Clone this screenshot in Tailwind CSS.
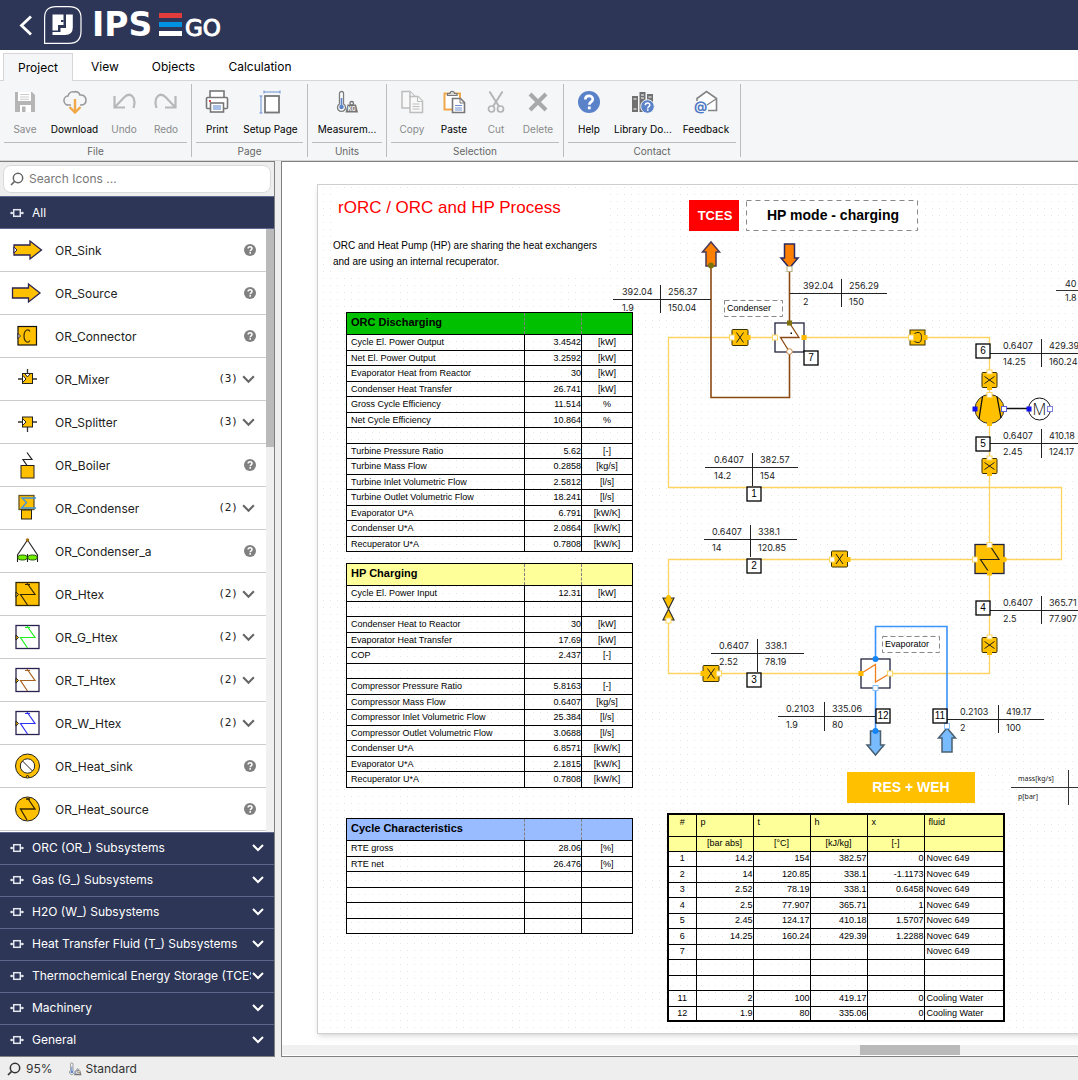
<!DOCTYPE html>
<html lang="en">
<head>
<meta charset="utf-8">
<title>IPSE GO</title>
<script src="https://cdn.jsdelivr.net/npm/@tailwindcss/browser@4"></script>
</head>
<body class="flex h-screen flex-col overflow-hidden bg-[#eeeeee] font-['Inter',sans-serif] text-[12px] text-[#222]">

<!-- Shared symbols -->
<svg class="hidden" aria-hidden="true">
  <symbol id="chev" viewBox="0 0 14 10"><path d="M2 2l5 5 5-5" fill="none" stroke="currentColor" stroke-width="2"/></symbol>
  <symbol id="help" viewBox="0 0 12 12"><circle cx="6" cy="6" r="6" fill="#808080"/><path d="M4.1 4.6c0-2.5 3.9-2.4 3.9-.1C8 5.900 6.200 5.700 6.200 7.200" fill="none" stroke="#fff" stroke-width="1.500"/><rect x="5.400" y="8.100" width="1.600" height="1.600" fill="#fff"/></symbol>
  <symbol id="block" viewBox="0 0 14 10"><path d="M1 5h3M10 5h3" stroke="#e4e7f0" stroke-width="1.500"/><circle cx="1.500" cy="5" r="1.200" fill="#e4e7f0"/><circle cx="12.500" cy="5" r="1.200" fill="#e4e7f0"/><rect x="3.700" y="1.700" width="6.600" height="6.600" fill="none" stroke="#e4e7f0" stroke-width="1.500"/></symbol>
  <symbol id="lens" viewBox="0 0 14 14"><circle cx="8" cy="6" r="4.700" fill="none" stroke="currentColor" stroke-width="1.500"/><path d="M5 9L1 13" stroke="currentColor" stroke-width="1.700"/></symbol>
  <symbol id="units" viewBox="0 0 24 24"><path d="M4.500 3.500a2 2 0 0 1 4 0V14a4 4 0 1 1-4 0z" fill="#fff" stroke="#7c7c7c" stroke-width="1.300"/><circle cx="6.500" cy="17" r="2.300" fill="#5b84c9"/><path d="M6.500 8v9" stroke="#5b84c9" stroke-width="1.600"/><path d="M12.500 14.500h8.500l2 8H10.500z" fill="#757575"/><circle cx="16.700" cy="13.300" r="1.800" fill="none" stroke="#757575" stroke-width="1.300"/><text x="12.800" y="21" font-size="5.500" font-weight="700" fill="#fff">KG</text></symbol>
</svg>

<header class="flex h-[50px] shrink-0 items-center bg-[#2d3656]">
  <a href="#" aria-label="Back" class="ml-[17px] block"><svg class="h-6 w-4" viewBox="0 0 16 24"><path d="M14 3.500L4.500 12.500 14 21.500" fill="none" stroke="#fff" stroke-width="2.800"/></svg></a>
  <svg class="ml-[10px] h-[40px] w-[40px]" viewBox="43 5 40 40" role="img" aria-label="Logo">
    <path d="M44.600 43.400V18Q44.600 6.600 56 6.600H69Q81 6.600 81 18V31Q81 43.400 69 43.400Z" fill="none" stroke="#fff" stroke-width="1.200"/>
    <path d="M52.500 14.500H63.500V25H58V30.500H52.500Z" fill="#fff"/>
    <path d="M66 14.500H72.800V27.500Q72.800 35 65 35H52.500V32H60.500V28H66Z" fill="#fff"/>
    <rect x="61" y="20" width="2.500" height="2" fill="#2d3656"/>
  </svg>
  <svg class="ml-[7px] h-[40px] w-[136px]" viewBox="90 5 136 40" fill="#fff" font-family="'DejaVu Sans',sans-serif">
    <text x="92" y="36" font-size="33" font-weight="700">IPS</text>
    <rect x="159" y="13" width="23" height="5" fill="#e03c3c"/><rect x="159" y="22" width="23" height="5" fill="#0092e0"/><rect x="159" y="31" width="23" height="5"/>
    <text x="185" y="36" font-size="23" stroke="#fff" stroke-width="1">GO</text>
  </svg>
</header>

<nav class="flex h-[31px] shrink-0 items-end border-b border-[#d6d6d6] bg-white pl-[3px] text-[12px] text-black">
  <button class="-mb-px h-[28px] w-[70px] border border-b-0 border-[#d6d6d6] bg-[#f4f6f8]">Project</button>
  <button class="h-[26px] w-[64px]">View</button>
  <button class="h-[26px] w-[73px]">Objects</button>
  <button class="h-[26px] w-[100px]">Calculation</button>
</nav>

<section class="flex h-[80px] shrink-0 items-stretch border-b border-[#d6d6d6] bg-[#f4f6f8] py-[3px] text-[10px] leading-[14px] text-black" aria-label="Ribbon">
  <div class="flex flex-col border-r border-[#bcbcbc] px-1">
    <div class="flex h-[59px] shrink-0 border-b border-[#bcbcbc]">
      <button class="flex w-[42px] flex-col items-center justify-start gap-2 pt-1.5 text-[#8a8a8a]"><svg class="h-6 w-6" viewBox="0 0 24 24"><path d="M2 2h17l3 3v17H2z" fill="#b5b5b5"/><rect x="5" y="2" width="13" height="9" fill="#fff"/><path d="M7 4.500h9M7 7h9M7 9.300h9" stroke="#ccc"/><rect x="7" y="15" width="11" height="7" fill="#fff"/><rect x="9" y="16.500" width="3.500" height="5.500" fill="#b5b5b5"/></svg>Save</button>
      <button class="flex w-[57px] flex-col items-center justify-start gap-2 pt-1.5"><svg class="h-6 w-6" viewBox="0 0 24 24"><path d="M8 15H6a4.500 4.500 0 0 1-1-9C6 2.500 9 1.500 11 2c2-1 5 0 6 3 3.500-.5 6 2 6 5s-2 5-5 5h-1" fill="none" stroke="#9a9a9a" stroke-width="1.600"/><path d="M12 9v13M6.500 17l5.500 5.500 5.500-5.500" fill="none" stroke="#f0a848" stroke-width="2.400"/></svg>Download</button>
      <button class="flex w-[42px] flex-col items-center justify-start gap-2 pt-1.5 text-[#8a8a8a]"><svg class="h-6 w-6" viewBox="0 0 24 24"><path d="M2.500 6v11.500H13M3 17L12 7.500c6-6 13-1 9.500 10.500" fill="none" stroke="#b8b8b8" stroke-width="2.200"/></svg>Undo</button>
      <button class="flex w-[42px] flex-col items-center justify-start gap-2 pt-1.5 text-[#8a8a8a]"><svg class="h-6 w-6" viewBox="0 0 24 24"><path d="M21.500 6v11.500H11M21 17L12 7.500C6 1.500-1 6.500 2.500 18" fill="none" stroke="#b8b8b8" stroke-width="2.200"/></svg>Redo</button>
    </div>
    <div class="pt-px text-center text-[#666]">File</div>
  </div>
  <div class="flex flex-col border-r border-[#bcbcbc] px-1">
    <div class="flex h-[59px] shrink-0 border-b border-[#bcbcbc]">
      <button class="flex w-[42px] flex-col items-center justify-start gap-2 pt-1.5"><svg class="h-6 w-6" viewBox="0 0 24 24"><g fill="#fff" stroke="#777" stroke-width="1.600"><rect x="5" y="1" width="14" height="7"/><rect x="1.500" y="7.500" width="21" height="11" rx="1"/><rect x="5.500" y="13" width="13" height="9"/></g><rect x="8" y="15" width="8" height="5" fill="#a9c0e6"/><rect x="4" y="10" width="2" height="2" fill="#d04040"/></svg>Print</button>
      <button class="flex w-[65px] flex-col items-center justify-start gap-2 pt-1.5"><svg class="h-6 w-6" viewBox="0 0 24 24"><rect x="6" y="6" width="14" height="16.500" fill="#fff" stroke="#777" stroke-width="1.800"/><path d="M5 2h16M5 .5v3M21 .5v3M2 6v17M.5 6h3M.5 23h3" stroke="#6c8fd0"/></svg>Setup Page</button>
    </div>
    <div class="pt-px text-center text-[#666]">Page</div>
  </div>
  <div class="flex flex-col border-r border-[#bcbcbc] px-1">
    <div class="flex h-[59px] shrink-0 border-b border-[#bcbcbc]">
      <button class="flex w-[70px] flex-col items-center justify-start gap-2 pt-1.5"><svg class="h-6 w-6"><use href="#units"/></svg>Measurem...</button>
    </div>
    <div class="pt-px text-center text-[#666]">Units</div>
  </div>
  <div class="flex flex-col border-r border-[#bcbcbc] px-1">
    <div class="flex h-[59px] shrink-0 border-b border-[#bcbcbc]">
      <button class="flex w-[42px] flex-col items-center justify-start gap-2 pt-1.5 text-[#8a8a8a]"><svg class="h-6 w-6" viewBox="0 0 24 24"><g fill="#f8f8f8" stroke="#bdbdbd" stroke-width="1.500"><path d="M2 1.500h8l5 5V18H2z"/><path d="M10 1.500V7h5"/><path d="M10 6.500h8l4.500 4.500v11.500H10z"/><path d="M17.500 6.500v5h5M12.500 14h7M12.500 16.500h7M12.500 19h7" stroke-width="1.100"/></g></svg>Copy</button>
      <button class="flex w-[42px] flex-col items-center justify-start gap-2 pt-1.5"><svg class="h-6 w-6" viewBox="0 0 24 24"><path d="M10 19.500H2.500V3.500H18V8" fill="#fff" stroke="#f0a848" stroke-width="2"/><path d="M5.500 5.500V3.500H8a2.200 2.200 0 0 1 4.500 0H15v2z" fill="#d9d9d9" stroke="#777" stroke-width="1.200"/><path d="M10.500 8.500h8l4 4v10h-12z" fill="#fff" stroke="#777" stroke-width="1.600"/><path d="M18 8.500v4.500h4.500" fill="none" stroke="#777"/><path d="M13 15.500h7M13 18h7M13 20h7" stroke="#6c8fd0"/></svg>Paste</button>
      <button class="flex w-[42px] flex-col items-center justify-start gap-2 pt-1.5 text-[#8a8a8a]"><svg class="h-6 w-6" viewBox="0 0 24 24" fill="none" stroke="#b5b5b5"><path d="M5.500 1.500L15 16.500M18.500 1.500L9 16.500" stroke-width="2"/><circle cx="7.500" cy="19" r="3" stroke-width="1.700"/><circle cx="16.500" cy="19" r="3" stroke-width="1.700"/></svg>Cut</button>
      <button class="flex w-[42px] flex-col items-center justify-start gap-2 pt-1.5 text-[#8a8a8a]"><svg class="h-6 w-6" viewBox="0 0 24 24"><path d="M4 4l16 16M20 4L4 20" stroke="#a9a9a9" stroke-width="4"/></svg>Delete</button>
    </div>
    <div class="pt-px text-center text-[#666]">Selection</div>
  </div>
  <div class="flex flex-col border-r border-[#bcbcbc] px-1">
    <div class="flex h-[59px] shrink-0 border-b border-[#bcbcbc]">
      <button class="flex w-[42px] flex-col items-center justify-start gap-2 pt-1.5"><svg class="h-6 w-6" viewBox="0 0 24 24"><circle cx="12" cy="12" r="11" fill="#5a82c8"/><path d="M8.300 9.500c0-5 7.500-4.700 7.500-.3 0 2.800-3.500 2.600-3.500 5.600" fill="none" stroke="#fff" stroke-width="2.600"/><rect x="10.900" y="16.500" width="2.800" height="2.800" fill="#fff"/></svg>Help</button>
      <button class="flex w-[66px] flex-col items-center justify-start gap-2 pt-1.5"><svg class="h-6 w-6" viewBox="0 0 24 24"><rect x="1" y="6" width="6" height="16" fill="#707070"/><rect x="8.500" y="2" width="6" height="20" fill="#707070"/><rect x="16" y="4" width="6" height="12" fill="#707070"/><path d="M2.500 9h3M2.500 19h3M10 5h3M10 8h3M17.500 7h3" stroke="#fff"/><circle cx="16.500" cy="16.500" r="6.800" fill="#5a82c8" stroke="#f4f6f8"/><path d="M14.300 15.200c0-3 4.500-2.900 4.500-.2 0 1.700-2.100 1.500-2.100 3.400" fill="none" stroke="#fff" stroke-width="1.500"/><rect x="15.900" y="19.200" width="1.600" height="1.600" fill="#fff"/></svg>Library Do...</button>
      <button class="flex w-[60px] flex-col items-center justify-start gap-2 pt-1.5"><svg class="h-6 w-6" viewBox="0 0 24 24"><path d="M3 11V8.500L12.500 1.500 22.500 8.500v12H14" fill="#fff" stroke="#858585" stroke-width="1.600"/><path d="M22 9l-9 6" stroke="#858585" stroke-width="1.400"/><text x="0" y="21" font-size="13" font-weight="700" fill="#4f78c4">@</text></svg>Feedback</button>
    </div>
    <div class="pt-px text-center text-[#666]">Contact</div>
  </div>
</section>

<main class="flex min-h-0 flex-1 gap-[6px]">
  <aside class="flex w-[275px] shrink-0 flex-col border-t border-r border-b border-[#808080]">
    <label class="mx-[3px] mt-[3px] mb-[3px] flex h-[28px] shrink-0 items-center rounded-lg border border-[#dadada] bg-white pl-[6px] text-[#666]">
      <svg class="h-3.5 w-3.5 shrink-0"><use href="#lens"/></svg>
      <input type="search" placeholder="Search Icons ..." aria-label="Search icons" class="ml-[5px] w-full bg-transparent text-[12px] outline-none placeholder:text-[#777]">
    </label>
    <button class="flex h-[33px] shrink-0 items-center gap-[8px] border-y border-[#5d678e] bg-[#2d3656] pl-[10px] text-[12px] text-white"><svg class="h-2.5 w-3.5"><use href="#block"/></svg>All</button>
    <div class="flex min-h-0 flex-1 overflow-hidden">
      <ul id="icons" class="flex-1 bg-white"></ul>
      <div class="w-2 bg-[#f0f0f0]"><div class="h-[218px] bg-[#bababa]"></div></div>
    </div>
    <div id="cats" class="shrink-0"></div>
  </aside>

  <div class="flex min-w-0 flex-1 flex-col border-t border-b border-l border-[#808080] bg-white">
    <div class="relative min-h-0 flex-1 overflow-hidden">
      <div class="absolute top-[22px] left-[35px] h-[850px] w-[1100px] border border-[#cfcfcf] bg-white shadow-md">
        <svg class="absolute inset-0 h-full w-full" id="sheet" font-family="Inter,sans-serif" font-size="9">
          <defs>
            <pattern id="dots" width="7" height="7" patternUnits="userSpaceOnUse"><rect x="5" y="2" width="1" height="1" fill="#e6e6e6"/></pattern>
            <g id="xv"><rect x="-8" y="-8" width="16" height="16" rx="1" fill="#ffc000" stroke="#3b3000"/><path d="M-3.500 -5L3.500 5M3.500 -5L-3.500 5" stroke="#222" fill="none"/></g>
            <g id="xh"><rect x="-7.500" y="-7.500" width="15" height="15" rx="1" fill="#ffc000" stroke="#3b3000"/><path d="M-5 -3.500L5 3.500M-5 3.500L5 -3.500" stroke="#222"/><rect x="-2.500" y="-10" width="5" height="4" fill="#fff" stroke="#ffd75e"/><rect x="-2.500" y="6" width="5" height="4" fill="#ffc000"/></g>
            <path id="arrow" d="M-5 24V10H-8.500L0 0L8.500 10H5V24Z" stroke-width="1.500"/>
            <rect id="port" x="-2.500" y="-2.500" width="5" height="5" fill="#fff"/>
            <rect id="full" x="-2.500" y="-2.500" width="5" height="5"/>
          </defs>
          <rect width="100%" height="100%" fill="url(#dots)"/>
          <g transform="translate(-318 -185)">
            <path d="M732 337.500H668.500V487.500H1061.500V559.500H1004M748 337.500H775M804 337.500H910M925 337.500H989.500V394M989.500 424V545M989.500 573V673.500H890M861 673.500H719M703 673.500H668.500V559.500H832M848 559.500H975" fill="none" stroke="#fdd362" stroke-width="1.300"/>
            <path d="M711 265V397.500H789.500V352M789.500 269V323" fill="none" stroke="#8b4a12" stroke-width="1.600"/>
            <path d="M875.500 659V626.500H947V728M875.500 688V731" fill="none" stroke="#3a93fa" stroke-width="1.600"/>
            <path d="M1004 408.500H1029" stroke="#111" stroke-width="1.500"/>
            <use href="#arrow" x="711" y="242" fill="#ff8000" stroke="#4a3a58"/>
            <use href="#arrow" transform="translate(789.500 268) rotate(180)" fill="#ff8000" stroke="#2a2a60"/>
            <use href="#arrow" transform="translate(875.500 755) rotate(180)" fill="#78bcff" stroke="#4a6070"/>
            <use href="#arrow" x="947" y="728" fill="#78bcff" stroke="#4a6070"/>
            <circle cx="711" cy="265.500" r="3" fill="#7d7008"/>
            <use href="#port" x="789.500" y="269" stroke="#b8b080"/>
            <use href="#xv" x="740" y="337.500"/><use href="#port" x="732" y="337.500" stroke="#ffd75e"/><use href="#full" x="748" y="337.500" fill="#ffc000"/>
            <use href="#xv" x="839.500" y="559"/><use href="#port" x="832" y="559.500" stroke="#ffd75e"/><use href="#full" x="848" y="559.500" fill="#ffc000"/>
            <use href="#xv" x="711" y="673.500"/><use href="#port" x="719" y="673.500" stroke="#ffd75e"/><use href="#full" x="703" y="673.500" fill="#ffc000"/>
            <rect x="910" y="330" width="15" height="15" fill="#ffc000" stroke="#3b3000"/><path d="M914.500 333.500c6-3 7 1 7 4s-1 7-7 4" fill="none" stroke="#222"/><use href="#port" x="911" y="337.500" stroke="#ffd75e"/><use href="#full" x="925" y="337.500" fill="#ffc000"/>
            <use href="#xh" x="989.500" y="380"/><use href="#xh" x="989.500" y="466"/><use href="#xh" x="989.500" y="645"/>
            <g stroke="#222240" stroke-width="1.300"><rect x="775" y="323" width="29" height="29" fill="#fff"/><rect x="861" y="659" width="29" height="29" fill="#fff"/><rect x="975" y="544.500" width="29" height="29" fill="#ffc000"/></g>
            <path d="M789.500 323L799 337.500H780.500L789.500 352" fill="none" stroke="#8b4a12" stroke-width="1.300"/><rect x="790.500" y="332.500" width="1.500" height="1.500"/>
            <path d="M861 673.500L875.500 664.500V682L890 673.500" fill="none" stroke="#f08020" stroke-width="1.300"/>
            <path d="M989.500 545L999 559.500H980.500L989.500 573" fill="none" stroke="#222" stroke-width="1.200"/>
            <use href="#full" x="789.500" y="323" fill="#7d7008"/><use href="#port" x="775" y="337.500" stroke="#ffd75e"/><use href="#full" x="804" y="337.500" fill="#ffb800"/><circle cx="789.500" cy="351.500" r="2.800" fill="#fff" stroke="#c88848"/>
            <circle cx="875.500" cy="659" r="3" fill="#1585f5"/><circle cx="875.500" cy="731" r="3" fill="#1585f5"/><use href="#port" x="875.500" y="688" stroke="#8cc4ff"/><use href="#full" x="861" y="673.500" fill="#ffb800"/><use href="#port" x="890" y="673.500" stroke="#ffd75e"/><use href="#port" x="947" y="726" stroke="#8cc4ff"/>
            <circle cx="989.500" cy="409" r="14.500" fill="#ffc000" stroke="#333"/><path d="M982.500 396.500L979 419M997 396.500L1001 418" stroke="#111" stroke-width="1.300"/>
            <use href="#port" x="989.500" y="395" stroke="#ffd75e"/><use href="#full" x="989.500" y="423.500" fill="#ffc000"/>
            <use href="#full" x="975" y="409" fill="#1010f0"/><use href="#port" x="1004" y="409" stroke="#6060d8"/>
            <circle cx="1039.500" cy="409" r="11" fill="#fff" stroke="#111"/><text x="1039.500" y="415" text-anchor="middle" font-size="16" font-family="'Open Sans',sans-serif" font-weight="300" fill="#111">M</text>
            <use href="#full" x="1029" y="409" fill="#1010f0"/><use href="#port" x="1050" y="409" stroke="#8080e0"/>
            <use href="#port" x="989.500" y="545" stroke="#ffd75e"/><use href="#full" x="989.500" y="573" fill="#ffc000"/><use href="#port" x="975" y="559.500" stroke="#ffd75e"/><circle cx="1004" cy="559.500" r="2.800" fill="#ffc000"/>
            <path d="M663 598H674L668.500 609Z M663 620H674L668.500 609Z" fill="#ffc000" stroke="#333" stroke-width="1.200"/><circle cx="668.500" cy="597.500" r="2.500" fill="#ffc000"/><use href="#port" x="668.500" y="620.500" stroke="#ffd75e"/>
            <rect x="689" y="200" width="50" height="31" fill="#f00"/>
            <rect x="746.500" y="200.500" width="171" height="30" fill="#fff" stroke="#888" stroke-dasharray="5 4"/>
            <rect x="847" y="772" width="128" height="31" fill="#ffc000"/>
            <rect x="724.500" y="300.500" width="58" height="16" fill="#fff" stroke="#888" stroke-dasharray="5 3"/>
            <rect x="882.500" y="636.500" width="57" height="16" fill="#fff" stroke="#888" stroke-dasharray="5 3"/>
            <g font-family="'Liberation Sans',sans-serif" fill="#000">
              <g font-weight="700" text-anchor="middle" font-size="14"><text x="715" y="220" fill="#fff" font-size="13">TCES</text><text x="833" y="220">HP mode - charging</text><text x="911" y="792" fill="#fff">RES + WEH</text></g>
              <text x="727" y="311">Condenser</text><text x="885" y="647">Evaporator</text>
            </g>
            <g id="meters" fill="#222"></g>
            <g id="tags" font-family="'Liberation Sans',sans-serif" font-size="10" text-anchor="middle"></g>
            <path d="M1011 787.500H1080M1068.500 770V805M1056 290.500H1080" stroke="#333"/>
            <g fill="#222"><text x="1065" y="287">40</text><text x="1065" y="301">1.8</text></g>
            <g fill="#222" font-size="7" font-family="'Noto Sans',sans-serif"><text x="1018" y="781">mass[kg/s]</text><text x="1018" y="799">p[bar]</text></g>
          </g>
        </svg>
        <div class="absolute top-[8px] left-[14px] w-[276px] bg-white font-['Liberation_Sans',sans-serif] text-black">
          <h1 class="pl-[6px] text-[17px] leading-[29px] text-[#f00]">rORC / ORC and HP Process</h1>
          <p class="mt-[16px] pb-[8px] pl-px text-[10px] leading-[16px] whitespace-nowrap">ORC and Heat Pump (HP) are sharing the heat exchangers<br>and are using an internal recuperator.</p>
        </div>
        <div id="tables" class="absolute top-[127px] left-[28px] w-[287px] font-['Liberation_Sans',sans-serif] text-[9px] leading-[11px] text-black"></div>
        <table class="absolute top-[628px] left-[349px] w-[338px] table-fixed border-collapse border-2 border-black font-['Liberation_Sans',sans-serif] text-[9px] leading-[11px] text-black">
          <colgroup><col class="w-[28px]"><col class="w-[57px]"><col class="w-[57px]"><col class="w-[57px]"><col class="w-[57px]"><col></colgroup>
          <thead class="bg-[#ffff99]">
            <tr class="h-[22px] text-left align-top"><th class="border border-black pt-[2px] text-center font-normal">#</th><th class="border border-black pt-[2px] pl-1 font-normal">p</th><th class="border border-black pt-[2px] pl-1 font-normal">t</th><th class="border border-black pt-[2px] pl-1 font-normal">h</th><th class="border border-black pt-[2px] pl-1 font-normal">x</th><th class="border border-black pt-[2px] pl-1 font-normal">fluid</th></tr>
            <tr class="h-[15px] text-center"><td class="border border-black"></td><td class="border border-black">[bar abs]</td><td class="border border-black">[°C]</td><td class="border border-black">[kJ/kg]</td><td class="border border-black">[-]</td><td class="border border-black"></td></tr>
          </thead>
          <tbody id="streams"></tbody>
        </table>
      </div>
    </div>
    <div class="mb-px h-[10px] shrink-0 bg-[#f0f0f0]"><div class="ml-[578px] h-full w-[100px] bg-[#bababa]"></div></div>
  </div>
</main>

<footer class="flex h-[23px] shrink-0 items-center pl-[7px] text-[12px] text-[#333]">
  <svg class="h-3.5 w-3.5"><use href="#lens"/></svg><span class="ml-[5px]">95%</span>
  <svg class="ml-[15px] h-3.5 w-3.5" viewBox="0 0 24 24"><use href="#units" width="24" height="24"/></svg><span class="ml-1">Standard</span>
</footer>

<script>
const htex = (c, bg, frame) => `<rect x="7" y="4.500" width="23" height="23" fill="${bg}" stroke="${frame}" stroke-width="1.300"/><path d="M16 6.500h5M18 5l8 11.500H11.500L18.500 27" fill="none" stroke="${c}" stroke-width="1.200"/><path d="M7 14l2.500 2.500L7 19z" fill="#ffc000" stroke="#222"/>`;
const items = [
  ['OR_Sink', 0, '<path d="M5 11H21V7L32.500 16 21 25V21H5Z" fill="#ffc000" stroke="#2a2250" stroke-width="1.300"/><path d="M5 13l3 3-3 3z" fill="#fff" stroke="#2a2250"/>'],
  ['OR_Source', 0, '<path d="M3.500 11H19.500V7L31 16 19.500 25V21H3.500Z" fill="#ffc000" stroke="#2a2250" stroke-width="1.300"/>'],
  ['OR_Connector', 0, '<rect x="9" y="6.500" width="18.500" height="18.500" fill="#ffc000" stroke="#111" stroke-width="1.200"/><path d="M21 11.500c-2.500-3.500-6-1-6 4.500s3.500 8 6 4.500" fill="none" stroke="#443300" stroke-width="1.200"/><path d="M9 13.500l2.500 2.500L9 18.500z" fill="#fff" stroke="#222"/>'],
  ['OR_Mixer', 3, '<path d="M9 16h19M18.500 6v6" stroke="#333" stroke-width="1.300"/><rect x="13.500" y="10.500" width="10" height="10" fill="#ffc000" stroke="#222"/><path d="M14 12.500l3 3.500-3 3M16 11l2.500 3 2.500-3" fill="#fff" stroke="#222"/>'],
  ['OR_Splitter', 3, '<path d="M9 16h19M18.500 20v6" stroke="#333" stroke-width="1.300"/><rect x="13.500" y="11" width="10" height="10" fill="#ffc000" stroke="#222"/><path d="M14 13l3 3-3 3" fill="#fff" stroke="#222"/>'],
  ['OR_Boiler', 0, '<rect x="12" y="16.500" width="13" height="12.500" fill="#ffc000" stroke="#222"/><path d="M18 3.500l5 7h-9l4 6" fill="none" stroke="#222" stroke-width="1.200"/>'],
  ['OR_Condenser', 2, '<rect x="10" y="3.500" width="15" height="14" fill="#ffc000" stroke="#665522" stroke-width="1.300"/><rect x="12.500" y="18" width="10" height="9" fill="#ffc000" stroke="#222"/><path d="M27 6H13l4.500 4.500-5 5.500H27" fill="none" stroke="#3b94e8" stroke-width="1.300"/>'],
  ['OR_Condenser_a', 0, '<path d="M18.500 5L8.500 20v7M18.500 5l10 15v7M18.500 19v8" fill="none" stroke="#222" stroke-width="1.100"/><ellipse cx="13.500" cy="22.500" rx="4.700" ry="2.500" fill="#70f000" stroke="#225500"/><ellipse cx="23.500" cy="22.500" rx="4.700" ry="2.500" fill="#70f000" stroke="#225500"/><circle cx="18.500" cy="5" r="1.700" fill="#a07010"/>'],
  ['OR_Htex', 2, htex('#332600', '#ffc000', '#332600')],
  ['OR_G_Htex', 2, htex('#20f020', '#fff', '#2a2250')],
  ['OR_T_Htex', 2, htex('#a86020', '#fff', '#2a2250')],
  ['OR_W_Htex', 2, htex('#3030f0', '#fff', '#2a2250')],
  ['OR_Heat_sink', 0, '<circle cx="18.500" cy="16" r="12" fill="#ffc000" stroke="#222"/><circle cx="18.500" cy="16" r="7.200" fill="#fff" stroke="#222"/><path d="M13.500 11l10 10M17 27l1.500-2 1.500 2" fill="none" stroke="#222"/>'],
  ['OR_Heat_source', 0, '<circle cx="18.500" cy="16" r="12" fill="#ffc000" stroke="#222"/><path d="M17 6h4M18.500 5L26 16H11.500l6.500 11" fill="none" stroke="#332600" stroke-width="1.300"/>'],
];
document.getElementById('icons').innerHTML = items.map(([name, n, art]) => `
  <li><button class="flex h-[43px] w-full items-center border-b border-[#cccccc] pr-[10px] pl-[9px] text-left text-[12px]">
    <svg class="h-8 w-9 shrink-0" viewBox="0 0 36 32">${art}</svg><span class="ml-[10px] flex-1 pt-px">${name}</span>
    ${n ? `<span class="mr-[3px] font-['DejaVu_Sans_Mono',monospace] text-[11px]">(${n})</span><svg class="h-[11px] w-[15px] text-[#666]"><use href="#chev"/></svg>` : '<svg class="h-3 w-3"><use href="#help"/></svg>'}
  </button></li>`).join('');

document.getElementById('cats').innerHTML = ['ORC (OR_) Subsystems', 'Gas (G_) Subsystems', 'H2O (W_) Subsystems', 'Heat Transfer Fluid (T_) Subsystems', 'Thermochemical Energy Storage (TCES) Subsystems', 'Machinery', 'General'].map(c => `
  <button class="flex h-8 w-full items-center border-t border-[#5d678e] bg-[#2d3656] pr-[9px] pb-px pl-[10px] text-left text-[12px] text-white">
    <svg class="h-2.5 w-3.5 shrink-0"><use href="#block"/></svg><span class="ml-[8px] flex-1 overflow-hidden whitespace-nowrap">${c}</span><svg class="h-2.5 w-3.5 shrink-0"><use href="#chev"/></svg>
  </button>`).join('');

const tables = [
  ['ORC Discharging', 'bg-[#00c000]', '', [['Cycle El. Power Output','3.4542','[kW]'],['Net El. Power Output','3.2592','[kW]'],['Evaporator Heat from Reactor','30','[kW]'],['Condenser Heat Transfer','26.741','[kW]'],['Gross Cycle Efficiency','11.514','%'],['Net Cycle Efficiency','10.864','%'],['','',''],['Turbine Pressure Ratio','5.62','[-]'],['Turbine Mass Flow','0.2858','[kg/s]'],['Turbine Inlet Volumetric Flow','2.5812','[l/s]'],['Turbine Outlet Volumetric Flow','18.241','[l/s]'],['Evaporator U*A','6.791','[kW/K]'],['Condenser U*A','2.0864','[kW/K]'],['Recuperator U*A','0.7808','[kW/K]']]],
  ['HP Charging', 'bg-[#ffff99]', 'mt-[11px]', [['Cycle El. Power Input','12.31','[kW]'],['','',''],['Condenser Heat to Reactor','30','[kW]'],['Evaporator Heat Transfer','17.69','[kW]'],['COP','2.437','[-]'],['','',''],['Compressor Pressure Ratio','5.8163','[-]'],['Compressor Mass Flow','0.6407','[kg/s]'],['Compressor Inlet Volumetric Flow','25.384','[l/s]'],['Compressor Outlet Volumetric Flow','3.0688','[l/s]'],['Condenser U*A','6.8571','[kW/K]'],['Evaporator U*A','2.1815','[kW/K]'],['Recuperator U*A','0.7808','[kW/K]']]],
  ['Cycle Characteristics', 'bg-[#99bbff]', 'mt-[30px]', [['RTE gross','28.06','[%]'],['RTE net','26.476','[%]'],['','',''],['','',''],['','',''],['','','']]],
];
document.getElementById('tables').innerHTML = tables.map(([title, bg, gap, rows]) => `
  <table class="w-full table-fixed border-collapse border border-black ${gap}">
    <colgroup><col class="w-[178px]"><col class="w-[57px]"><col></colgroup>
    <thead><tr class="h-[22px] ${bg}"><th class="border-b border-black pb-[3px] pl-1 text-left text-[11px]">${title}</th><th class="border-b border-l border-dashed border-[#808080] border-b-black"></th><th class="border-b border-l border-dashed border-[#808080] border-b-black"></th></tr></thead>
    <tbody>${rows.map(([a, b, c], i) => `<tr class="${i % 2 ? 'h-[15px]' : 'h-[16px]'}"><td class="border border-black pl-1">${a}</td><td class="border border-black text-right">${b}</td><td class="border border-black text-center">${c}</td></tr>`).join('')}</tbody>
  </table>`).join('');

const streams = [['1','14.2','154','382.57','0','Novec 649'],['2','14','120.85','338.1','-1.1173','Novec 649'],['3','2.52','78.19','338.1','0.6458','Novec 649'],['4','2.5','77.907','365.71','1','Novec 649'],['5','2.45','124.17','410.18','1.5707','Novec 649'],['6','14.25','160.24','429.39','1.2288','Novec 649'],['7','','','','','Novec 649'],['','','','','',''],['','','','','',''],['11','2','100','419.17','0','Cooling Water'],['12','1.9','80','335.06','0','Cooling Water']];
document.getElementById('streams').innerHTML = streams.map((r, i) => `<tr class="${i % 2 ? 'h-[16px]' : 'h-[15px]'}">${r.map((v, j) => `<td class="${j === 0 ? 'border border-black text-center' : j === 5 ? 'border border-black pl-[2px]' : 'border border-black text-right'}">${v}</td>`).join('')}</tr>`).join('');

// Each meter: line start, line end, line y, divider x, divider bottom, then mass flow, enthalpy, pressure, temperature
const meters = [[613,711,299,660,313,'392.04','256.37','1.9','150.04'],[790,887,293,841,307,'392.04','256.29','2','150'],[989,1080,353,1041,367,'0.6407','429.39','14.25','160.24'],[989,1080,443,1041,458,'0.6407','410.18','2.45','124.17'],[989,1080,610,1041,624,'0.6407','365.71','2.5','77.907'],[705,798,467,752,486,'0.6407','382.57','14.2','154'],[704,797,539,750,557,'0.6407','338.1','14','120.85'],[711,804,653,757,672,'0.6407','338.1','2.52','78.19'],[778,875,716,824,731,'0.2103','335.06','1.9','80'],[947,1044,719,998,733,'0.2103','419.17','2','100']];
document.getElementById('meters').innerHTML = meters.map(([x1, x2, y, v, b, m, h, p, t]) => `<path d="M${x1} ${y + .5}H${x2}M${v + .5} ${y - 14}V${b}" stroke="#222"/><text x="${v - 38}" y="${y - 4}">${m}</text><text x="${v + 8}" y="${y - 4}">${h}</text><text x="${v - 38}" y="${y + 12}">${p}</text><text x="${v + 8}" y="${y + 12}">${t}</text>`).join('');

const tags = [[811,358,'7'],[983,351,'6'],[983,444,'5'],[983,608,'4'],[754,494,'1'],[754,566,'2'],[754,680,'3'],[883,716,'12'],[940,716,'11']];
document.getElementById('tags').innerHTML = tags.map(([x, y, n]) => `<rect x="${x - 7}" y="${y - 7}" width="14" height="14" fill="#fff" stroke="#000" stroke-width="1.300"/><text x="${x}" y="${y + 3}">${n}</text>`).join('');
</script>
</body>
</html>
